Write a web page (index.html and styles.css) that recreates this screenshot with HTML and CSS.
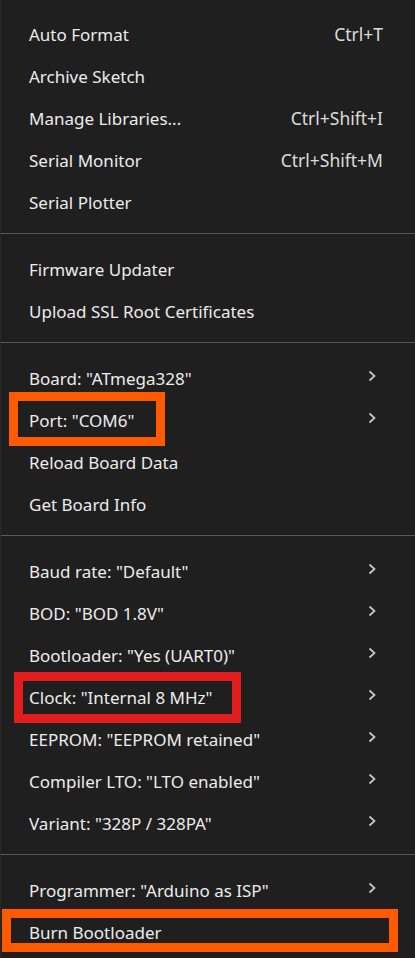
FILE: index.html
```html
<!DOCTYPE html>
<html>
<head>
<meta charset="utf-8">
<link rel="stylesheet" href="styles.css">
</head>
<body>
<div class="menu">
  <div class="section">
    <div class="item"><span class="label">Auto Format</span><span class="key">Ctrl+T</span></div>
    <div class="item"><span class="label">Archive Sketch</span></div>
    <div class="item"><span class="label">Manage Libraries...</span><span class="key">Ctrl+Shift+I</span></div>
    <div class="item"><span class="label">Serial Monitor</span><span class="key">Ctrl+Shift+M</span></div>
    <div class="item"><span class="label">Serial Plotter</span></div>
  </div>
  <div class="sep"></div>
  <div class="section">
    <div class="item"><span class="label">Firmware Updater</span></div>
    <div class="item"><span class="label">Upload SSL Root Certificates</span></div>
  </div>
  <div class="sep"></div>
  <div class="section">
    <div class="item"><span class="label">Board: "ATmega328"</span><svg class="chev" viewBox="0 0 12 12"><path d="M3.5 1.5 L8.5 6 L3.5 10.5"/></svg></div>
    <div class="item mark-port"><span class="label">Port: "COM6"</span><svg class="chev" viewBox="0 0 12 12"><path d="M3.5 1.5 L8.5 6 L3.5 10.5"/></svg></div>
    <div class="item"><span class="label">Reload Board Data</span></div>
    <div class="item"><span class="label">Get Board Info</span></div>
  </div>
  <div class="sep"></div>
  <div class="section">
    <div class="item"><span class="label">Baud rate: "Default"</span><svg class="chev" viewBox="0 0 12 12"><path d="M3.5 1.5 L8.5 6 L3.5 10.5"/></svg></div>
    <div class="item"><span class="label">BOD: "BOD 1.8V"</span><svg class="chev" viewBox="0 0 12 12"><path d="M3.5 1.5 L8.5 6 L3.5 10.5"/></svg></div>
    <div class="item"><span class="label">Bootloader: "Yes (UART0)"</span><svg class="chev" viewBox="0 0 12 12"><path d="M3.5 1.5 L8.5 6 L3.5 10.5"/></svg></div>
    <div class="item mark-clock"><span class="label">Clock: "Internal 8 MHz"</span><svg class="chev" viewBox="0 0 12 12"><path d="M3.5 1.5 L8.5 6 L3.5 10.5"/></svg></div>
    <div class="item"><span class="label">EEPROM: "EEPROM retained"</span><svg class="chev" viewBox="0 0 12 12"><path d="M3.5 1.5 L8.5 6 L3.5 10.5"/></svg></div>
    <div class="item"><span class="label">Compiler LTO: "LTO enabled"</span><svg class="chev" viewBox="0 0 12 12"><path d="M3.5 1.5 L8.5 6 L3.5 10.5"/></svg></div>
    <div class="item"><span class="label">Variant: "328P / 328PA"</span><svg class="chev" viewBox="0 0 12 12"><path d="M3.5 1.5 L8.5 6 L3.5 10.5"/></svg></div>
  </div>
  <div class="sep"></div>
  <div class="section">
    <div class="item"><span class="label">Programmer: "Arduino as ISP"</span><svg class="chev" viewBox="0 0 12 12"><path d="M3.5 1.5 L8.5 6 L3.5 10.5"/></svg></div>
    <div class="item mark-burn"><span class="label">Burn Bootloader</span></div>
  </div>
</div>
</body>
</html>
```

FILE: styles.css
```css
html, body {
  margin: 0;
  padding: 0;
  background: #1f1f1f;
}

.menu {
  width: 415px;
  height: 958px;
  box-sizing: border-box;
  background: #1f1f1f;
  border-left: 1px solid #2a2a2a;
  padding-top: 13px;
  font-family: "Noto Sans", "Open Sans", sans-serif;
  font-size: 17px;
  color: #ececec;
  overflow: hidden;
}

.section {
  display: flex;
  flex-direction: column;
}

.item {
  position: relative;
  height: 42px;
  display: flex;
  align-items: center;
  justify-content: space-between;
  padding: 0 32px 0 28px;
}

.key {
  color: #dcdcdc;
  font-size: 17.5px;
}

.chev {
  width: 12px;
  height: 12px;
  margin-right: 5px;
  margin-top: -5px;
  fill: none;
  stroke: #c8c8c8;
  stroke-width: 1.7;
}

.sep {
  height: 1px;
  background: #5a5a5a;
  margin: 10px 0 14px;
}

.mark-port::before,
.mark-clock::before,
.mark-burn::before {
  content: "";
  position: absolute;
  box-sizing: border-box;
  border: 9px solid #ff5a00;
}

.mark-port::before {
  left: 8px;
  top: -7px;
  width: 156px;
  height: 54px;
}

.mark-clock::before {
  left: 13px;
  top: -4px;
  width: 227px;
  height: 51px;
  border-color: #e11d1d;
}

.mark-burn::before {
  left: 1px;
  top: -2px;
  width: 396px;
  height: 43px;
}
```
